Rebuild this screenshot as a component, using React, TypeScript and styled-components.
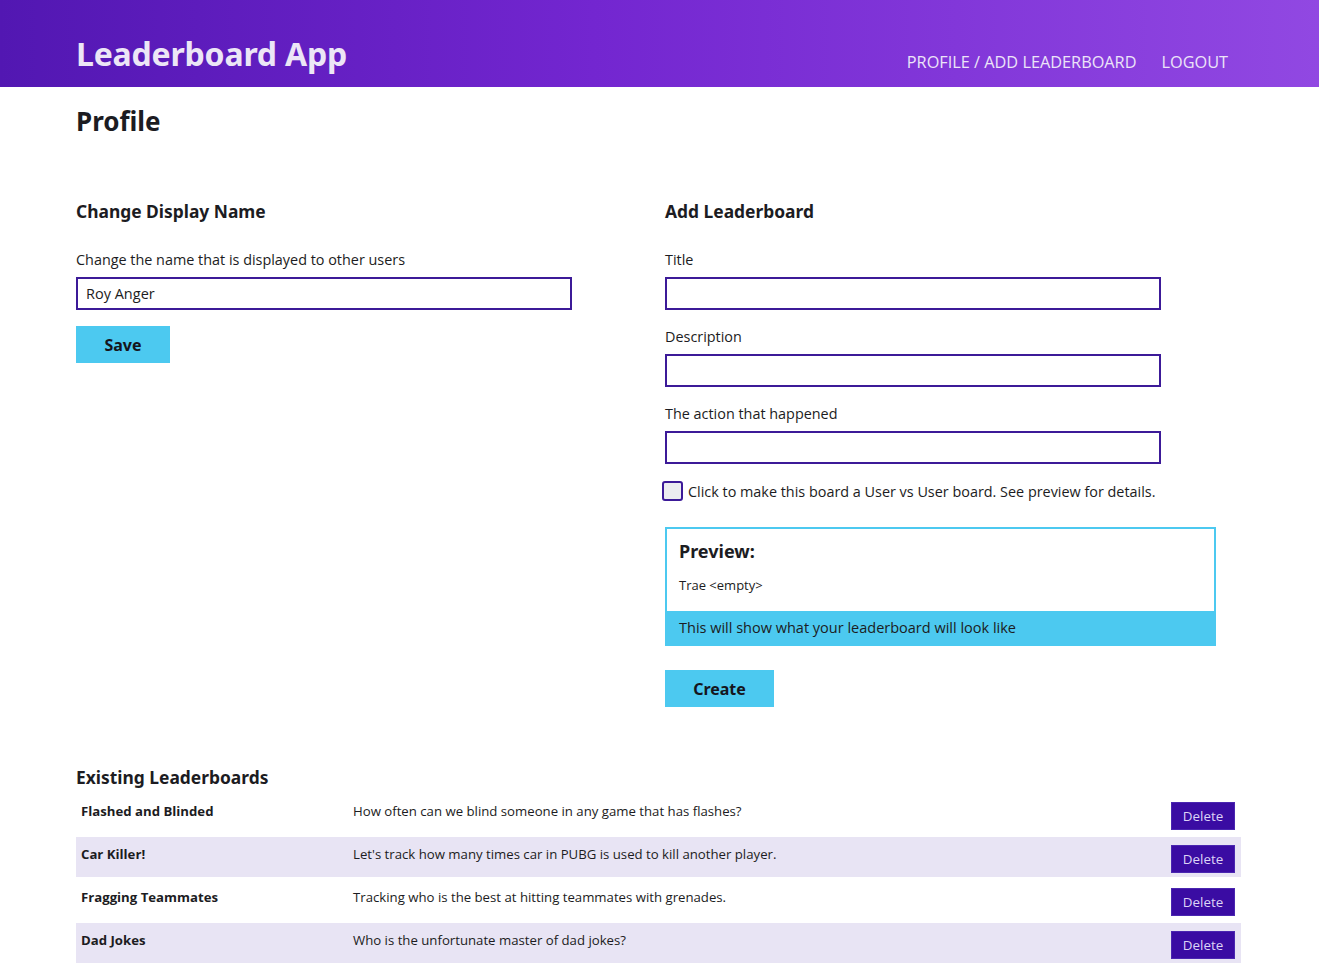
import styled, { createGlobalStyle } from 'styled-components'

const GlobalStyle = createGlobalStyle`
  body {
    margin: 0;
    font-family: 'Open Sans', 'Noto Sans', sans-serif;
    color: #1c1c22;
    background: #fff;
  }
  * { box-sizing: border-box; }
`

const Header = styled.header`
  height: 87px;
  background: linear-gradient(90deg, #5217b2 0%, #7326d0 45%, #9148e2 100%);
  display: flex;
  align-items: flex-start;
  justify-content: space-between;
  padding: 0 91px 0 76px;
`

const Brand = styled.h1`
  margin: 0;
  padding-top: 34px;
  font-family: 'Noto Sans', sans-serif;
  font-weight: 700;
  font-size: 32px;
  line-height: 40px;
  color: #ece6f6;
  letter-spacing: -0.2px;
`

const Nav = styled.nav`
  display: flex;
  gap: 25px;
  padding-top: 51px;
`

const NavLink = styled.a`
  color: #ece4f8;
  font-size: 16.3px;
  line-height: 22px;
  text-decoration: none;
  text-transform: uppercase;
`

const Main = styled.main`
  width: 1165px;
  margin: 0 0 0 76px;
`

const PageTitle = styled.h2`
  margin: 17px 0 0;
  font-family: 'Noto Sans', sans-serif;
  font-size: 26px;
  font-weight: 700;
  line-height: 34px;
`

const Columns = styled.div`
  display: grid;
  grid-template-columns: 589px 1fr;
  margin-top: 61px;
`

const Column = styled.section`
  display: flex;
  flex-direction: column;
`

const SectionTitle = styled.h3`
  margin: 0 0 27px;
  font-family: 'Noto Sans', sans-serif;
  font-size: 17.4px;
  font-weight: 700;
  line-height: 24px;
`

const Label = styled.label`
  font-size: 14.4px;
  line-height: 20px;
  margin-bottom: 7px;
`

const Input = styled.input`
  width: 496px;
  height: 33px;
  border: 2px solid #3c1a98;
  padding: 0 8px;
  font-family: inherit;
  font-size: 14.5px;
  color: #1c1c22;
  margin-bottom: 17px;
  outline: none;
`

const Button = styled.button<{ $w: number }>`
  width: ${p => p.$w}px;
  height: 37px;
  border: none;
  background: #4cc9f0;
  font-family: 'Noto Sans', sans-serif;
  font-weight: 700;
  font-size: 16px;
  color: #15151c;
  cursor: pointer;
`

const SaveButton = styled(Button)`
  margin-top: -1px;
`

const CheckRow = styled.label`
  display: flex;
  align-items: center;
  gap: 5px;
  margin: 0 0 0 -3px;
  font-size: 14.4px;
`

const Box = styled.span`
  width: 21px;
  height: 20px;
  border: 2px solid #3c1a98;
  border-radius: 3px;
  background: #ececf0;
`

const Preview = styled.div`
  width: 551px;
  margin-top: 26px;
  border: 2px solid #4cc9f0;
`

const PreviewBody = styled.div`
  padding: 10px 12px 17px;
`

const PreviewTitle = styled.h4`
  margin: 0 0 13px;
  font-family: 'Noto Sans', sans-serif;
  font-size: 18px;
  font-weight: 700;
  line-height: 24px;
`

const PreviewText = styled.div`
  font-size: 13px;
  line-height: 18px;
`

const PreviewFooter = styled.div`
  background: #4cc9f0;
  padding: 7px 12px 6px;
  font-size: 14.5px;
  line-height: 20px;
`

const CreateWrap = styled.div`
  margin-top: 24px;
`

const Existing = styled.section`
  margin-top: 58px;
`

const ExistingTitle = styled(SectionTitle)`
  margin-bottom: 5px;
`

const Table = styled.div`
  display: flex;
  flex-direction: column;
`

const Row = styled.div<{ $alt: boolean }>`
  display: grid;
  grid-template-columns: 272px 1fr auto;
  align-items: start;
  height: 40px;
  padding: 5px 6px 0 5px;
  margin-bottom: 3px;
  background: ${p => (p.$alt ? '#e8e4f4' : '#fff')};
  font-size: 13.2px;
`

const Name = styled.div`
  font-weight: 700;
  padding-top: 3px;
`

const Desc = styled.div`
  padding-top: 3px;
`

const DeleteButton = styled.button`
  width: 64px;
  height: 28px;
  border: 1px solid #4a26b0;
  background: #3a0ca3;
  color: #ddd4f6;
  font-family: inherit;
  font-size: 13.4px;
  margin-top: 3px;
  cursor: pointer;
`

const boards = [
  { name: 'Flashed and Blinded', desc: 'How often can we blind someone in any game that has flashes?' },
  { name: 'Car Killer!', desc: "Let's track how many times car in PUBG is used to kill another player." },
  { name: 'Fragging Teammates', desc: 'Tracking who is the best at hitting teammates with grenades.' },
  { name: 'Dad Jokes', desc: 'Who is the unfortunate master of dad jokes?' },
]

export default function App() {
  return (
    <>
      <GlobalStyle />
      <Header>
        <Brand>Leaderboard App</Brand>
        <Nav>
          <NavLink href="#">Profile / Add Leaderboard</NavLink>
          <NavLink href="#">Logout</NavLink>
        </Nav>
      </Header>
      <Main>
        <PageTitle>Profile</PageTitle>
        <Columns>
          <Column>
            <SectionTitle>Change Display Name</SectionTitle>
            <Label>Change the name that is displayed to other users</Label>
            <Input defaultValue="Roy Anger" />
            <SaveButton $w={94}>Save</SaveButton>
          </Column>
          <Column>
            <SectionTitle>Add Leaderboard</SectionTitle>
            <Label>Title</Label>
            <Input />
            <Label>Description</Label>
            <Input />
            <Label>The action that happened</Label>
            <Input />
            <CheckRow>
              <Box />
              Click to make this board a User vs User board. See preview for details.
            </CheckRow>
            <Preview>
              <PreviewBody>
                <PreviewTitle>Preview:</PreviewTitle>
                <PreviewText>Trae &lt;empty&gt;</PreviewText>
              </PreviewBody>
              <PreviewFooter>This will show what your leaderboard will look like</PreviewFooter>
            </Preview>
            <CreateWrap>
              <Button $w={109}>Create</Button>
            </CreateWrap>
          </Column>
        </Columns>
        <Existing>
          <ExistingTitle>Existing Leaderboards</ExistingTitle>
          <Table>
            {boards.map((b, i) => (
              <Row key={b.name} $alt={i % 2 === 1}>
                <Name>{b.name}</Name>
                <Desc>{b.desc}</Desc>
                <DeleteButton>Delete</DeleteButton>
              </Row>
            ))}
          </Table>
        </Existing>
      </Main>
    </>
  )
}
